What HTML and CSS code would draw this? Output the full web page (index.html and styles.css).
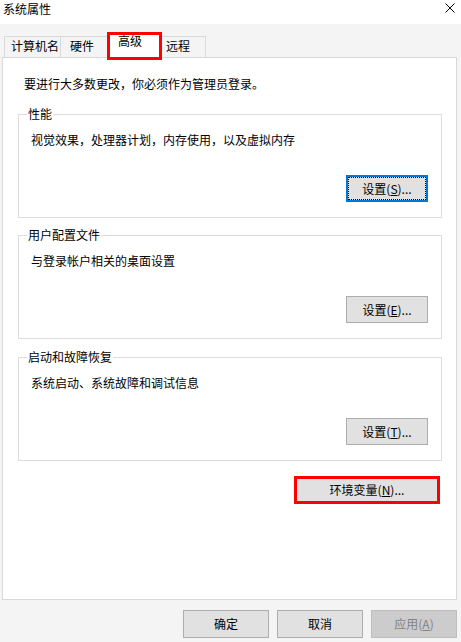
FILE: index.html
```html
<!DOCTYPE html>
<html lang="zh-CN">
<head>
  <meta charset="UTF-8" />
  <meta name="viewport" content="width=device-width, initial-scale=1.0"/>
  <title>系统属性</title>
  <link rel="stylesheet" href="styles.css">
</head>
<body>
  <div class="titlebar">
    <span class="title">系统属性</span>
    <svg class="close" width="10" height="10" viewBox="0 0 10 10">
      <path d="M0.5 0.5 L9.5 9.5 M9.5 0.5 L0.5 9.5" stroke="#000" stroke-width="1" fill="none"/>
    </svg>
  </div>

  <div class="dialog">
    <div class="tabs">
      <div class="tab first">计算机名</div>
      <div class="tab second">硬件</div>
      <div class="tab active">高级</div>
      <div class="tab last">远程</div>
    </div>

    <div class="panel">
      <p class="notice">要进行大多数更改，你必须作为管理员登录。</p>

      <fieldset class="group">
        <legend>性能</legend>
        <p class="desc">视觉效果，处理器计划，内存使用，以及虚拟内存</p>
        <div class="actions">
          <button class="btn focused">设置(<u>S</u>)...</button>
        </div>
      </fieldset>

      <fieldset class="group">
        <legend>用户配置文件</legend>
        <p class="desc">与登录帐户相关的桌面设置</p>
        <div class="actions">
          <button class="btn">设置(<u>E</u>)...</button>
        </div>
      </fieldset>

      <fieldset class="group last-group">
        <legend>启动和故障恢复</legend>
        <p class="desc">系统启动、系统故障和调试信息</p>
        <div class="actions">
          <button class="btn">设置(<u>T</u>)...</button>
        </div>
      </fieldset>

      <div class="env-row">
        <button class="btn env">环境变量(<u>N</u>)...</button>
      </div>
    </div>

    <div class="footer">
      <button class="btn wide">确定</button>
      <button class="btn wide">取消</button>
      <button class="btn wide" disabled>应用(<u>A</u>)</button>
    </div>
  </div>
</body>
</html>
```

FILE: styles.css
```css
body {
  margin: 0;
  width: 461px;
  height: 642px;
  overflow: hidden;
  background: #f4f4f4;
  color: #000;
  font-family: "Noto Sans CJK SC", "Noto Sans", sans-serif;
  font-size: 12px;
  line-height: 16px;
}

.titlebar {
  height: 24px;
  background: #fff;
  display: flex;
  justify-content: space-between;
  align-items: flex-start;
  padding: 1px 6px 0 3px;
  box-sizing: border-box;
}

.close {
  margin-top: 2px;
}

.dialog {
  padding: 0 4px 0 2px;
}

/* tab strip */
.tabs {
  height: 33px;
  display: flex;
  align-items: flex-end;
  padding-left: 2px;
}

.tab {
  height: 21px;
  box-sizing: border-box;
  border-top: 1px solid #d9d9d9;
  border-right: 1px solid #d9d9d9;
  padding-top: 1px;
  white-space: nowrap;
}

.tab.first {
  width: 57px;
  border-left: 1px solid #d9d9d9;
  padding-left: 6px;
}

.tab.second {
  width: 46px;
  padding-left: 9px;
  border-right: none;
}

.tab.last {
  width: 44px;
  padding-left: 4px;
}

.tab.active {
  position: relative;
  z-index: 1;
  width: 55px;
  height: 28px;
  margin-bottom: -3px;
  border: 3px solid #f00;
  background: #fff;
  padding: 0 0 0 8px;
  line-height: 12px;
}

/* main panel */
.panel {
  height: 543px;
  box-sizing: border-box;
  background: #fff;
  border: 1px solid #d9d9d9;
  padding-top: 18px;
}

.notice {
  margin: 0 0 0 21px;
}

.group {
  margin: 14px 14px 0 15px;
  padding: 0 0 15px 8px;
  border: 1px solid #dcdcdc;
  min-inline-size: 0;
}

.group + .group {
  margin-top: 9px;
}

.group.last-group {
  margin-top: 10px;
}

.group legend {
  padding: 0 1px;
}

.desc {
  margin: 10px 0 0 4px;
}

.actions {
  display: flex;
  justify-content: flex-end;
  margin-top: 27px;
  padding-right: 13px;
}

.btn {
  width: 82px;
  height: 27px;
  box-sizing: border-box;
  background: #e1e1e1;
  border: 1px solid #adadad;
  color: #000;
  font-family: inherit;
  font-size: 12px;
  line-height: 16px;
  padding: 0;
}

.btn.focused {
  border: 2px solid #0078d7;
  outline: 1px dotted #000;
  outline-offset: -3px;
}

.env-row {
  display: flex;
  justify-content: flex-end;
  margin: 15px 16px 0 0;
}

.btn.env {
  width: 146px;
  height: 28px;
  border: 3px solid #f00;
}

.footer {
  display: flex;
  justify-content: flex-end;
  gap: 8px;
  margin-top: 10px;
}

.btn.wide {
  width: 86px;
  height: 28px;
}

.btn:disabled {
  background: #cccccc;
  border-color: #bfbfbf;
  color: #838383;
}
```
